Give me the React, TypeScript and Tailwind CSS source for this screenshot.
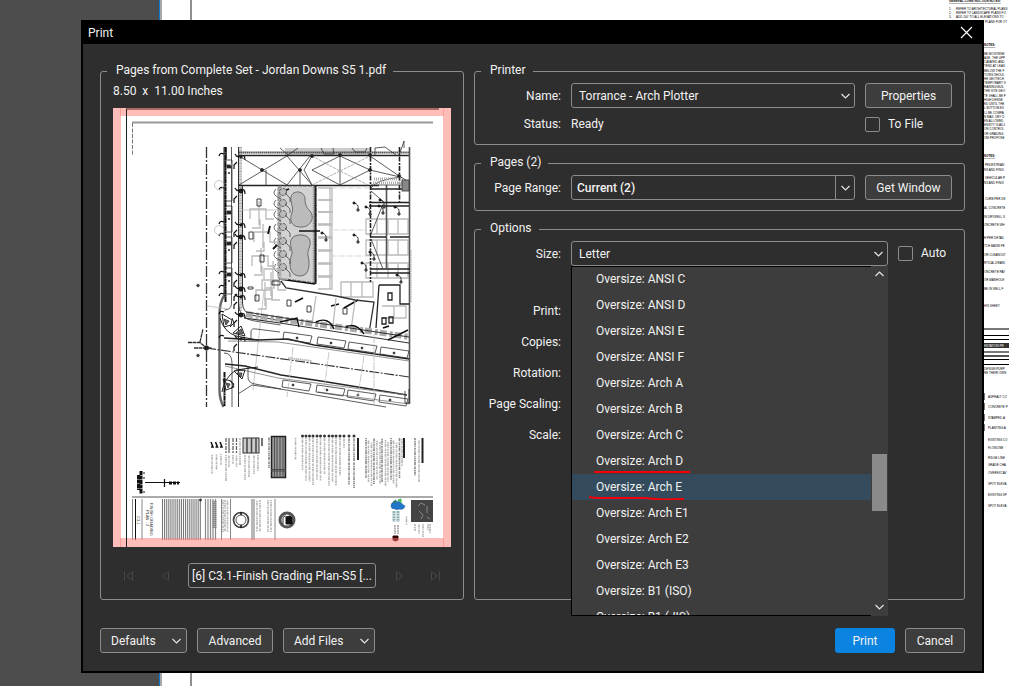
import { ReactNode } from "react";

type NoteLine = {
  x: number;
  y: number;
  text: string;
  bold?: boolean;
};

const noteLines: NoteLine[] = [
  { x: 949, y: 2, text: "GENERAL CONSTRUCTION NOTES:", bold: true },
  { x: 949, y: 10, text: "1." },
  { x: 956, y: 10, text: "REFER TO ARCHITECTURAL PLANS" },
  { x: 949, y: 14, text: "2." },
  { x: 956, y: 14, text: "REFER TO LANDSCAPE PLANS FO" },
  { x: 949, y: 18, text: "3." },
  { x: 956, y: 18, text: "ADD 100' TO ALL ELEVATIONS TO" },
  { x: 985, y: 23, text: "PLANS FOR OT" },
  { x: 984, y: 46, text: "NOTES:", bold: true },
  { x: 984, y: 55, text: "BE MOISTENE" },
  { x: 984, y: 59, text: "AGE. THE UPP" },
  { x: 984, y: 63, text: "CAVATED AND" },
  { x: 984, y: 67, text: "TEND AT LEAS" },
  { x: 984, y: 72, text: "BELOW THE F" },
  { x: 984, y: 76, text: "TIONS SHOUL" },
  { x: 984, y: 80, text: "HE GEOTECH" },
  { x: 984, y: 84, text: "TEMPORARY S" },
  { x: 984, y: 88, text: "RAINING BUIL" },
  { x: 984, y: 92, text: "THE SITE GEO" },
  { x: 984, y: 97, text: "TE SHALL BE P" },
  { x: 984, y: 101, text: "HIGH DENSE" },
  { x: 984, y: 105, text: "ED UNTIL THE" },
  { x: 984, y: 109, text: "L BOTTOM EX" },
  { x: 984, y: 114, text: "LL BE COMPA" },
  { x: 984, y: 118, text: "N MAX. DRY D" },
  { x: 984, y: 122, text: "EN ALLOWED" },
  { x: 984, y: 126, text: "ENSITY IS ADJ" },
  { x: 984, y: 130, text: "ON CONTROL" },
  { x: 984, y: 135, text: "OR GRADING" },
  { x: 984, y: 139, text: "OM PROPOSE" },
  { x: 984, y: 157, text: "NOTES:", bold: true },
  { x: 985, y: 166, text: "PEDESTRIAN" },
  { x: 984, y: 171, text: "NS AND FINIS" },
  { x: 985, y: 179, text: "VEHICULAR P" },
  { x: 984, y: 184, text: "NS AND FINIS" },
  { x: 985, y: 200, text: "CURB PER DE" },
  { x: 984, y: 209, text: "AL CONCRETE" },
  { x: 984, y: 218, text: "IN DRYWELL S" },
  { x: 984, y: 226, text: "ONCRETE WH" },
  { x: 984, y: 239, text: "H PER DETAIL" },
  { x: 984, y: 247, text: "TCH BASIN PE" },
  { x: 984, y: 256, text: "OR CLEANOUT" },
  { x: 984, y: 264, text: "RTICAL DRAIN" },
  { x: 984, y: 273, text: "ONCRETE PAV" },
  { x: 984, y: 281, text: "OR MANHOLE" },
  { x: 984, y: 290, text: "BE IN WELL F" },
  { x: 984, y: 307, text: "HIS SHEET." },
  { x: 984, y: 370, text: "DESIGN PURP" },
  { x: 984, y: 374, text: "RE THEIR OWN" },
  { x: 988, y: 398, text: "ASPHALT CO" },
  { x: 988, y: 408, text: "CONCRETE P" },
  { x: 988, y: 419, text: "STAMPED A" },
  { x: 988, y: 429, text: "PLANTING A" },
  { x: 988, y: 441, text: "EXISTING CO" },
  { x: 988, y: 449, text: "FLOWLINE" },
  { x: 988, y: 459, text: "RIDGE LINE" },
  { x: 988, y: 466, text: "GRADE CHA" },
  { x: 988, y: 474, text: "OVEREXCAV" },
  { x: 988, y: 485, text: "SPOT ELEVA" },
  { x: 988, y: 496, text: "EXISTING SP" },
  { x: 988, y: 507, text: "SPOT ELEVA" },
];

const tableRules = [
  { y: 328, h: 2, color: "#777" },
  { y: 335, h: 1, color: "#000" },
  { y: 339, h: 1, color: "#000" },
  { y: 343, h: 5, color: "#333" },
  { y: 351, h: 2, color: "#777" },
  { y: 355, h: 2, color: "#555" },
  { y: 359, h: 1, color: "#000" },
  { y: 364, h: 1, color: "#000" },
];

const sizes = [
  "ANSI C",
  "ANSI D",
  "ANSI E",
  "ANSI F",
  "Arch A",
  "Arch B",
  "Arch C",
  "Arch D",
  "Arch E",
  "Arch E1",
  "Arch E2",
  "Arch E3",
  "B1 (ISO)",
  "B1 (JIS)",
];

const boxStyle = "h-[25px] rounded-[3px] border border-[#8c8c8c]";

function Chevron({ up = false }: { up?: boolean }) {
  return (
    <svg width="9" height="6" viewBox="0 0 9 6" fill="none" stroke="#e4e4e4" strokeWidth="1.2">
      <path d={up ? "M0.5 5 4.5 1l4 4" : "M0.5 1l4 4 4-4"} />
    </svg>
  );
}

// The sheet that is open in the editor behind the dialog
function DocumentCanvas() {
  return (
    <div className="absolute inset-0 flex overflow-hidden bg-[#4d4d4d]">
      <div className="w-[159px] shrink-0" />
      <div className="flex-1 border-l border-[#0a7bd0] bg-white">
        <div className="h-full w-8 border-l-2 border-r-2 border-l-[#a9a9a9] border-r-[#8f8f8f]" />
      </div>
      <svg className="absolute left-0 top-0" width="1009" height="686" fontFamily="Liberation Sans, sans-serif">
        {tableRules.map((rule) => (
          <rect key={rule.y} x="984" y={rule.y} width="25" height={rule.h} fill={rule.color} />
        ))}
        <text x="984" y="347" fontSize="3" fill="#fff">ENTATION PR</text>
        {[396, 406, 417, 427].map((y) => (
          <path key={y} d={`M984.5 ${y - 3}v7`} stroke="#777" />
        ))}
        {noteLines.map((line) => (
          <text
            key={`${line.x}-${line.y}`}
            x={line.x}
            y={line.y}
            fontSize="3"
            fontWeight={line.bold ? 700 : 400}
            textDecoration={line.bold ? "underline" : undefined}
            fill="#000"
          >
            {line.text}
          </text>
        ))}
      </svg>
    </div>
  );
}

// Column of unreadable annotation text, drawn as a broken line
function Scribble({ x, y, h, dark = false }: { x: number; y: number; h: number; dark?: boolean }) {
  return (
    <path
      d={`M${x} ${y}v${h}`}
      stroke={dark ? "#888" : "#b4b4b4"}
      strokeWidth="1.6"
      strokeDasharray="2 .7 1.3 .5 3 .8 .8 .6"
      strokeDashoffset={x % 5}
    />
  );
}

function SitePlan() {
  return (
    <g fill="none" stroke="#333" strokeWidth=".8">
      {/* street on the left */}
      <path d="M206.5 147v260" strokeWidth="1.3" strokeDasharray="11 2 2 2" />
      <path d="M224.5 147v148q-5 7-5 20v75q0 9 4 17" stroke="#666" strokeWidth="2.4" />
      <path d="M225.5 147v155M224.5 372v34" stroke="#111" strokeWidth="2" strokeDasharray="5 .5 2 .4" />
      <path d="M231.5 147v156q0 7-7 7M226.5 147v12M224 353q8 0 8 10v44" />
      {[160, 206, 237, 268].map((y) => (
        <g key={y}>
          <path d={`M226 ${y}h6v${y === 160 ? 41 : 26}h-6`} />
          <rect x="227" y={y + 5} width="4" height="3" fill="#222" />
          <circle cx="229" cy={y + 13} r=".7" fill="#111" />
        </g>
      ))}
      <path d="M240.5 147v164" stroke="#aaa" strokeWidth="3" strokeDasharray="1 .6" />
      <path d="M238.5 147v260M242.5 185v118q0 9 9 12l29 6" strokeWidth="1" />
      <path d="M238.5 303q0 16 16 18l26 4" />
      {[154, 188, 222, 234, 272, 286, 294, 312, 336].map((y, i) => (
        <g key={y} stroke="#111" strokeWidth="1.2">
          <path d={`M219 ${y + 2}q1-4 5-2M235 ${y}q2 4 6 2t4 4M237 ${y + 8}l-3 3v4`} />
          <circle cx={241} cy={y + 3} r={i % 2 ? 1.8 : 1} fill="#222" />
        </g>
      ))}
      <g stroke="#bbb">
        <circle cx="219" cy="185" r="4.5" />
        <circle cx="219" cy="230" r="4.5" />
        <path d="M207 306l22 3M231 163v3M242 210h35M264 290l-11 100" />
      </g>
      {/* north marker */}
      <path d="M188 342.500h12l6 5M200 342l3-13M194 348h18" strokeWidth="1.3" strokeDasharray="4 .5" />
      <circle cx="206.500" cy="348" r="2.300" fill="#111" />
      <circle cx="198" cy="285.500" r="1.300" fill="#444" />
      <circle cx="198" cy="355.500" r="1.300" fill="#444" />

      {/* upper walkway and bracing */}
      <rect x="285" y="148" width="86" height="7" fill="#ccc" stroke="none" />
      <path d="M239 152.500h170" stroke="#555" strokeWidth="2.200" strokeDasharray="1.500 .4" />
      <path d="M239 155.500h170M239 185.500h140" stroke="#222" strokeWidth="1.500" />
      <path d="M321 148l3 6h10l-1-6M352 148l3 4h10l2-4M375 155v-7l10-1 11 8M280 148l8 7 10-7M399 155l3-8 2-6v7" />
      <path d="M239 156l48 29M239 185l48-29M287 156l25 29M287 185l23-29M312 185l-8-15 8-14M312 170l28-14 30 14-30 15-28-15M340 155v31M370 156l32 22M370 170l30 7M266 170v15M300 170v18" />
      <path d="M312 156l28 15 30-15M312 185l28-14 28 14" strokeDasharray="3 1" stroke="#999" />
      {[[262, 170], [300, 170], [340, 155], [370, 170], [399, 176], [370, 155], [312, 156]].map(([x, y]) => (
        <circle key={`${x}-${y}`} cx={x} cy={y} r="1.600" fill="#222" />
      ))}

      {/* pool deck */}
      <path d="M278 186h38v97l-38-5z" fill="#d2d2d2" stroke="#555" strokeDasharray="4 1" />
      <path d="M280 187v93M314 187v95" stroke="#888" strokeWidth="2.500" strokeDasharray="1 .8" />
      <path d="M315.500 185v99" strokeWidth="2" stroke="#222" />
      <path
        d="M291 197c2-8 14-6 14 2 0 6 2 9 5 12 6 8-1 17-10 16-9 0-11-8-8-14 2-6-2-10-1-16zM291 240c2-7 18-7 19 1 1 7-3 8-2 15 2 7 2 20-8 20-11 0-11-13-9-19 3-7-2-10 0-17z"
        fill="#bbb"
        stroke="#555"
      />
      <path d="M299 231h21M281 192l8-3M279 279l36 5" stroke="#111" strokeWidth="1.400" />
      {[192, 203, 214, 227, 241, 254, 267].map((y) => (
        <g key={y} stroke="#444">
          <circle cx="283" cy={y} r="3.500" fill="#bbb" strokeDasharray="3 1" />
          <path d={`M276 ${y - 3}q-4 4 0 7l5 3M285 ${y + 1}l5 5v4`} />
        </g>
      ))}

      {/* units */}
      <g stroke="#bbb" strokeWidth="1.300">
        {[[250, 209], [254, 232], [252, 256], [264, 269], [256, 290], [262, 280]].map(([x, y]) => (
          <path key={`${x}-${y}`} d={`M${x} ${y + 10}v-10h16v10h8M${x + 9} ${y - 8}v24M${x + 2} ${y + 19}h8v-9`} />
        ))}
        {[188, 200, 212, 225, 238, 251, 264, 277].map((y) => (
          <path key={y} d={`M318 ${y}h14v12h-14M330 ${y}v12`} />
        ))}
        {[219, 240, 263].map((y) => (
          <path key={y} d={`M366 ${y}h42v15h-42zM377 ${y}v15M388 ${y}v15M398 ${y}v15`} />
        ))}
        <path d="M341 282h32v15h-32zM351 282v15M362 282v15M382 306h24v12h-24M394 306v12" />
        <path d="M332 188h38M334 230h32M332 256h38" strokeWidth=".600" strokeDasharray="5 1 1 1" />
      </g>
      <path d="M257 199h4v7h-4zM249 232h4v7h-4zM260 255h4v7h-4zM272 281h8v4h-8zM248 287h5v2h-5zM255 295h4v6h-4z" stroke="#111" />
      <path d="M270 226l-2 8M273 249l4-4M358 300l-14 8M303 298l-8 4M339 304l-8 2M389 326l-6 2" stroke="#111" strokeWidth="1.800" />

      {/* right edge */}
      <path d="M409.500 147v257M386.500 185v83" stroke="#555" strokeWidth="1.600" />
      <path d="M370.500 147v135M399.500 147v55" stroke="#222" strokeWidth="1.600" strokeDasharray="5 1.500 2 1" />
      <path d="M369 202.500h40M369 206h40M370 269h40M370 273h40M370 189h39M370 237h16M390 237h19" stroke="#222" strokeWidth="1.400" />
      <path d="M371 188q4-8 30-11l8 5v3h-38M371 234l12-30M371 239l12 30M371 191l14 12" />
      <path d="M374 179h30M373 183h34" stroke="#aaa" strokeWidth="3" strokeDasharray="1 1" />
      <rect x="402" y="180" width="7" height="11" fill="#888" />
      {[[354, 203], [354, 235], [379, 206], [395, 207], [366, 207], [362, 263], [397, 275], [322, 233], [380, 200], [370, 252]].map(([x, y]) => (
        <g key={`${x}-${y}`} stroke="#111">
          <circle cx={x} cy={y} r="1.100" fill="#111" />
          <path d={`M${x} ${y}q5 1 4 6`} />
          <circle cx={x + 4} cy={y + 7} r="1.200" fill="#888" />
        </g>
      ))}
      <path d="M379 285h21v19h9M379 285l-3 43M388 293h4v7h-4zM382 318h4v6h-4zM389 317h4v6h-4z" stroke="#222" strokeWidth="1.300" />
      <path d="M411 250v52" stroke="#888" strokeDasharray="1.500 .800" />

      {/* south building row */}
      <path d="M281 281l5 7 50 8 19 4 19 2-5 31" strokeWidth="1.300" />
      <path d="M316 296l-4 28M336 298l-3 28M355 301l-4 29" stroke="#bbb" strokeWidth="1.300" />
      <path d="M287 300h4v6h-4zM307 306h4v6h-4zM343 308h4v6h-4z" stroke="#111" />
      <path d="M246 314l34 5 36 5 53 7 40 6" stroke="#aaa" strokeWidth="6" strokeDasharray="7 3 3 2" />
      <path d="M246 312l163 25M244 318l36 5 129 20" strokeWidth="1.100" />
      <path d="M280 322l17-4 2 9M316 322q12-6 18 7M346 327q10-5 18 7M388 340l20-10" stroke="#111" strokeWidth="1.400" />

      {/* diagonal road */}
      <path d="M224 338l34 2 30-1 26 6 95 14" stroke="#222" strokeWidth="1.500" />
      <path d="M225 364l20 2 36 9 40 6 86 14" stroke="#222" strokeWidth="1.500" />
      <path d="M228 341l50 1 131 19M225 366l53 12 129 17" stroke="#777" />
      <path d="M206 348l203 29" strokeWidth="1.100" strokeDasharray="10 1.500 2 1.500" />
      <path d="M248 367v10q0 6 7 7l26 5M238 394l14-9 28 4 106 18" />
      <path d="M318 392l91 12" stroke="#777" />
      <path d="M251 338v-6q0-4 5-3l24 3" />
      {[[284, 332], [318, 337], [349, 342], [381, 347]].map(([x, y]) => (
        <g key={x}>
          <path d={`M${x} ${y}l28 4-2 7-27-4zM${x - 1} ${y + 48}l28 4-2 7-27-4z`} />
          <circle cx={x + 13} cy={y + 6} r="1" fill="#111" />
          <circle cx={x + 9} cy={y + 53} r="1" fill="#111" />
        </g>
      ))}
      <path d="M293 347l-6 50M329 352l-5 38M364 356l-6 40M374 335v70" stroke="#bbb" strokeDasharray="8 1" />
      <path d="M288 358l24 3" stroke="#bbb" strokeWidth="2" strokeDasharray="1.500 .500" />
      {/* corner ramps */}
      <g stroke="#222" strokeWidth="1">
        <path d="M220 318q4 14 16 18l22 4M222 314l10 6-1 5-7 2zM233 333l8-7 4 10zM232 318l2 5-4 4" />
        <path d="M222 392q2-14 14-22l22-3M223 379l8 2 3 6-8 3zM234 371l8 8 3-9zM230 381l4 3-3 5" />
      </g>
      <path d="M224 319l5 2-3 4zM236 333l5-4 2 5zM226 383l4 1-2 4zM237 373l5 0-1 4z" fill="#666" />
      <path d="M405 391v12h4v-14" stroke="#222" />
    </g>
  );
}

function TitleBlock() {
  const stripes = Array.from({ length: 19 }, (_, i) => 162.500 + i * 2.100);
  return (
    <g fill="none" stroke="#444">
      {/* legends and schedules */}
      {[212, 216.500, 221].map((x) => (
        <g key={x}>
          <path d={`M${x - 1} 442l2 5h-2`} stroke="#111" strokeWidth="1.500" />
          <Scribble x={x} y={454} h={20 - (x - 212)} />
        </g>
      ))}
      {[226, 229, 233, 236.500].map((x, i) => (
        <g key={x}>
          <path d={`M${x} 438v15`} stroke="#666" strokeWidth="1.300" strokeDasharray={i === 1 ? undefined : "4 1 2 1"} />
          <Scribble x={x} y={455} h={i === 0 ? 26 : 9 + (i % 2) * 3} />
        </g>
      ))}
      <Scribble x={240} y={438} h={27} />
      <rect x="243" y="438" width="16" height="15" fill="#ccc" stroke="#333" />
      <path d="M247 438v15M251.500 438v15M256 438v15M262 438v8" stroke="#444" strokeWidth="1.500" />
      {[245, 249, 254, 258].map((x, i) => (
        <Scribble key={x} x={x} y={455} h={25 - i * 3} />
      ))}
      <Scribble x={269} y={437} h={31} dark />
      <rect x="271.500" y="436.500" width="14" height="41" fill="#999" stroke="#222" strokeWidth="1.500" />
      <path d="M274.500 437v41M277 437v41M280 437v41M283 437v41M271 469.500h15M271 471h15" stroke="#444" strokeWidth=".900" />
      <Scribble x={295.500} y={438} h={22} />
      {[302.500, 306, 309.500, 313, 317, 320.500, 324.500, 329, 332.500, 336, 340, 344, 349, 354].map((x, i) => (
        <g key={x}>
          <circle cx={x} cy="436" r="1.500" fill="#333" stroke="none" />
          <Scribble x={x} y={438} h={[32, 43, 44, 47, 42, 43, 36, 48, 44, 48, 38, 10, 47, 50][i]} dark={i > 11} />
        </g>
      ))}
      <path d="M358 438v22M404 438v20M422.500 438v25" stroke="#222" strokeWidth="2" />
      {[366, 368.500, 371.500, 374, 377, 380, 382, 385.500, 388, 391, 393.500, 396.500, 399.500].map((x, i) => (
        <Scribble key={x} x={x} y={438 + (i % 3) * 2} h={40 + (i % 4) * 2} dark={i % 3 === 0} />
      ))}
      <Scribble x={415} y={438} h={38} dark />
      <Scribble x={419} y={440} h={42} />
      <Scribble x={402} y={438} h={28} />

      {/* scale bar */}
      <path d="M141 471v23M138.500 475v15" stroke="#111" strokeWidth="3" strokeDasharray="4 .500" />
      <path d="M143 473h2M143 478h2M143 492h2M145 482.500h35M164.500 479v8" stroke="#111" strokeWidth="1.200" />
      <path d="M169 483h10" stroke="#111" strokeWidth="3" strokeDasharray="3 1" />

      {/* title strip */}
      <path d="M132 497h301" stroke="#aaa" strokeWidth="2" />
      <path d="M132.500 499v41M142 499v41M221.500 499v41M230.500 499v41M275 499v41" stroke="#888" />
      <path d="M135.500 499v41" stroke="#111" />
      {stripes.map((x) => (
        <path key={x} d={`M${x} 499v41`} stroke="#777" strokeWidth="1.100" />
      ))}
      <circle cx="200.500" cy="500" r="1" fill="#111" />
      {[205.500, 208, 210.500, 213, 215.500, 252, 254].map((x) => (
        <path key={x} d={`M${x} 499v41`} stroke="#888" strokeWidth="1.200" />
      ))}
      <path d="M214.500 501v27" stroke="#888" strokeWidth="4" strokeDasharray="1.500 .500" />
      {[223, 225, 227.500, 257, 260, 268, 271].map((x) => (
        <Scribble key={x} x={x} y={500} h={32} />
      ))}
      <g fill="#333" stroke="none" fontFamily="Liberation Sans, sans-serif" fontSize="4">
        <text transform="translate(150 503) rotate(90)">FINISH GRADING</text>
        <text transform="translate(146 510) rotate(90)">PLAN - 2</text>
        <text transform="translate(137 516) rotate(90)">C3.1</text>
      </g>
      <circle cx="241" cy="520" r="7.500" stroke="#444" strokeWidth="1.700" />
      <circle cx="241" cy="520" r="5" stroke="#555" />
      <path d="M241 512v3M241 525v3" stroke="#111" strokeWidth="1.500" />
      <circle cx="287" cy="520" r="7" fill="#fff" stroke="#555" strokeWidth="3" />
      <path d="M286 517l4-1 2 2v6h-6z" fill="#111" stroke="#111" />
      <path d="M283 524v-6q0-2 3-2" stroke="#333" />

      {/* consultant logo */}
      <path d="M394 511v11M398 511v11" stroke="#8fb0b4" strokeWidth="3" strokeDasharray="2 .600" />
      <path d="M391 506q0-4 4-4 5-2 8 3 3 0 1 3-2 2-5 1-2 1-4 0-4 0-4-3z" fill="#2276c9" stroke="#1762a8" strokeWidth=".600" />
      <path d="M393 502l3-2v3z" fill="#2c7f78" stroke="#2c7f78" />
      <path d="M398 500l3-1v4z" fill="#44b957" stroke="#44b957" />
      <path d="M395 525v9M398 525v9" stroke="#999" strokeWidth="1.500" strokeDasharray="2 .600" />
      <path d="M393 536h5v4q-3 2-5 0z" fill="#300" stroke="#300" />
      <Scribble x={406.500} y={516} h={9} />
      <rect x="411" y="500" width="22" height="22" fill="#444" stroke="none" />
      <path d="M418 506l3-3 4 2M419 511l4 4M427 506v7M421 519l2-4M427 517l3 2" stroke="#999" strokeWidth=".800" />
      {[415, 419, 423, 428, 430].map((x, i) => (
        <Scribble key={x} x={x} y={524} h={7 + (i % 3) * 3} />
      ))}
    </g>
  );
}

function PagePreview() {
  return (
    <svg className="block h-auto w-full" viewBox="113 108 338 439" role="img" aria-label="Page preview">
      <rect x="113" y="108" width="338" height="439" fill="#fff" />
      <path d="M132 122.500h301" stroke="#999" strokeWidth="2" />
      <path d="M132.500 123v32" stroke="#777" strokeDasharray="4 1.500" />
      <SitePlan />
      <TitleBlock />
      <path
        d="M113 108h338v439h-338zM121 116v422h322v-422z"
        fill="#ff7c76"
        fillOpacity=".5"
        fillRule="evenodd"
      />
      <path d="M120.500 108v8M443.500 108v8M120.500 538v9M443.500 538v9" stroke="#ff9d98" />
      <path d="M126 109h313" stroke="#a86b68" strokeWidth="2" />
      <path d="M126.500 109v438" stroke="#222" />
    </svg>
  );
}

function Group({ title, className = "", children }: { title: string; className?: string; children: ReactNode }) {
  return (
    <fieldset className={`min-w-0 rounded-[3px] border border-[#8c8c8c] ${className}`}>
      <legend className="ml-1.5 pb-0.5 pl-[9px] pr-[7px] leading-[16px]">{title}</legend>
      {children}
    </fieldset>
  );
}

function NavButton({ label, d }: { label: string; d: string }) {
  return (
    <button type="button" aria-label={label} disabled className="flex size-6 items-center justify-center">
      <svg width="12" height="12" viewBox="0 0 12 12" fill="none" stroke="#484848">
        <path d={d} />
      </svg>
    </button>
  );
}

function CheckField({ id, label }: { id: string; label: string }) {
  return (
    <div className="flex items-center gap-2">
      <input
        id={id}
        type="checkbox"
        className="size-[15px] appearance-none rounded-[2px] border border-[#8c8c8c] checked:bg-[#0a84e0]"
      />
      <label htmlFor={id} className="leading-[15px]">{label}</label>
    </div>
  );
}

function SizeList() {
  return (
    <div className="absolute left-0 top-full z-10 flex h-[350px] w-full overflow-hidden bg-[#3d3d3d]">
      <ul role="listbox" aria-label="Size" className="relative flex-1 overflow-hidden border-l border-black">
        {sizes.map((size) => (
          <li
            key={size}
            role="option"
            aria-selected={size === "Arch E"}
            className={`relative h-[26px] pl-6 leading-[26px] ${size === "Arch E" ? "bg-[#334b5d]" : ""}`}
          >
            Oversize: {size}
            {size === "Arch D" && (
              <svg className="absolute bottom-0 left-[22px]" width="98" height="6" fill="none" stroke="#f40009" strokeWidth="2">
                <path d="M0 4h96" />
              </svg>
            )}
            {size === "Arch E" && (
              <svg className="absolute bottom-0 left-[17px]" width="98" height="6" fill="none" stroke="#f40009" strokeWidth="2">
                <path d="M0 3q4 1 10 1h46q8 1 20 1.500l19-.500" />
              </svg>
            )}
          </li>
        ))}
        <li role="presentation" className="absolute inset-0 border-y border-black" />
      </ul>
      <div className="flex w-[17px] flex-col items-center">
        <div className="flex h-[188px] items-start pt-[5px]">
          <Chevron up />
        </div>
        <div className="h-[57px] w-[15px] bg-[#8a8a8a]" />
        <div className="mt-auto pb-[6px]">
          <Chevron />
        </div>
      </div>
    </div>
  );
}

export default function App() {
  const button = `${boxStyle} bg-[#3d3d3d]`;

  return (
    <main className="relative flex min-h-screen flex-col bg-white pb-[13px] pl-[81px] pr-[25px] pt-5 font-['Roboto',sans-serif] text-[12px] text-[#f2f2f2]">
      <DocumentCanvas />

      <div role="dialog" aria-labelledby="dialog-title" className="relative border-x-2 border-b-2 border-black bg-[#2e2e2e]">
        <div className="flex h-6 items-center justify-between bg-black pl-[5px] pr-[9px] pt-px">
          <h1 id="dialog-title">Print</h1>
          <button type="button" aria-label="Close">
            <svg width="13" height="13" viewBox="0 0 13 13" stroke="#fff" strokeWidth="1.200">
              <path d="M1 1l11 11M12 1L1 12" />
            </svg>
          </button>
        </div>

        <form className="px-[17px] pb-[18px] pt-[18px]" onSubmit={(e) => e.preventDefault()}>
          <div className="grid grid-cols-[364fr_491fr] gap-2.5">
            <Group title="Pages from Complete Set - Jordan Downs S5 1.pdf">
              <div className="px-3 pb-[11px]">
                <p className="mb-2 mt-0.5 whitespace-pre leading-[18px]">8.50  x  11.00 Inches</p>
                <PagePreview />
                <div className="mt-4 flex h-[25px] items-center justify-between px-1">
                  <NavButton label="First page" d="M1.500 1.500v9M9.500 2v8L3.500 6z" />
                  <NavButton label="Previous page" d="M9.500 2v8L3 6z" />
                  <button type="button" className={`${boxStyle} w-[188px] whitespace-nowrap`}>
                    [6] C3.1-Finish Grading Plan-S5 [...
                  </button>
                  <NavButton label="Next page" d="M2.500 2v8L9 6z" />
                  <NavButton label="Last page" d="M10.500 1.500v9M2.500 2v8L8.500 6z" />
                </div>
              </div>
            </Group>

            <div className="flex flex-col gap-[9px]">
              <Group title="Printer" className="pb-[11px] pr-3">
                <div className="grid grid-cols-[86px_1fr_87px] items-center gap-x-2.5 gap-y-2 pt-[3px]">
                  <label htmlFor="printer" className="text-right">Name:</label>
                  <div className="relative">
                    <select id="printer" className={`${boxStyle} block w-full appearance-none bg-[#2e2e2e] px-[7px]`}>
                      <option>Torrance - Arch Plotter</option>
                    </select>
                    <span className="pointer-events-none absolute inset-y-0 right-[5px] flex items-center">
                      <Chevron />
                    </span>
                  </div>
                  <button type="button" className={button}>Properties</button>
                  <span className="text-right leading-[17px]">Status:</span>
                  <span className="leading-[17px]">Ready</span>
                  <CheckField id="to-file" label="To File" />
                </div>
              </Group>

              <Group title="Pages (2)" className="pb-2.5 pr-3">
                <div className="grid grid-cols-[86px_1fr_87px] items-center gap-x-2.5 pt-[3px]">
                  <label htmlFor="page-range" className="text-right">Page Range:</label>
                  <div className={`${boxStyle} flex`}>
                    <input
                      id="page-range"
                      defaultValue="Current (2)"
                      className="min-w-0 flex-1 pl-[5px] font-medium outline-none"
                    />
                    <button
                      type="button"
                      aria-label="Page ranges"
                      className="flex w-[19px] items-center justify-center border-l border-[#8c8c8c]"
                    >
                      <Chevron />
                    </button>
                  </div>
                  <button type="button" className={button}>Get Window</button>
                </div>
              </Group>

              <Group title="Options" className="flex-1 pr-3">
                <div className="grid grid-cols-[86px_1fr_54px] items-center gap-2.5 pt-[3px]">
                  <label htmlFor="size" className="text-right">Size:</label>
                  <div className="relative">
                    <select id="size" className={`${boxStyle} block w-full appearance-none bg-[#2e2e2e] px-[7px]`}>
                      <option>Letter</option>
                    </select>
                    <span className="pointer-events-none absolute right-[5px] top-0 flex h-[25px] items-center">
                      <Chevron />
                    </span>
                    <SizeList />
                  </div>
                  <CheckField id="auto" label="Auto" />
                </div>
                <div className="mt-[33px] flex w-[86px] flex-col gap-1.5 text-right leading-[25px]">
                  {["Print:", "Copies:", "Rotation:", "Page Scaling:", "Scale:"].map((label) => (
                    <span key={label}>{label}</span>
                  ))}
                </div>
              </Group>
            </div>
          </div>

          <div className="mt-7 flex gap-2.5">
            <button type="button" className={`${button} flex w-[87px] items-center justify-between pl-2.5 pr-[5px]`}>
              Defaults <Chevron />
            </button>
            <button type="button" className={`${button} w-[76px]`}>Advanced</button>
            <button type="button" className={`${button} flex w-[92px] items-center justify-between pl-2.5 pr-[5px]`}>
              Add Files <Chevron />
            </button>
            <button type="submit" className="ml-auto h-[25px] w-[60px] rounded-[3px] bg-[#0a84e0]">Print</button>
            <button type="button" className={`${button} w-[60px]`}>Cancel</button>
          </div>
        </form>
      </div>
    </main>
  );
}
